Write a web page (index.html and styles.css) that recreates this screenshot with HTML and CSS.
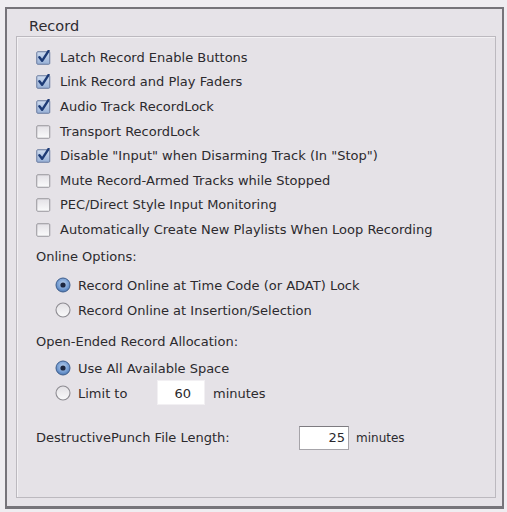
FILE: index.html
```html
<!DOCTYPE html>
<html>
<head>
<meta charset="utf-8">
<link rel="stylesheet" href="styles.css">
</head>
<body>
<div class="frame">
  <div class="title">Record</div>
  <div class="panel">
    <div class="row check-row"><svg class="cb" viewBox="0 0 15 15"><use href="#cb-on"/></svg><span>Latch Record Enable Buttons</span></div>
    <div class="row check-row"><svg class="cb" viewBox="0 0 15 15"><use href="#cb-on"/></svg><span>Link Record and Play Faders</span></div>
    <div class="row check-row"><svg class="cb" viewBox="0 0 15 15"><use href="#cb-on"/></svg><span>Audio Track RecordLock</span></div>
    <div class="row check-row"><svg class="cb" viewBox="0 0 15 15"><use href="#cb-off"/></svg><span>Transport RecordLock</span></div>
    <div class="row check-row"><svg class="cb" viewBox="0 0 15 15"><use href="#cb-on"/></svg><span>Disable "Input" when Disarming Track (In "Stop")</span></div>
    <div class="row check-row"><svg class="cb" viewBox="0 0 15 15"><use href="#cb-off"/></svg><span>Mute Record-Armed Tracks while Stopped</span></div>
    <div class="row check-row"><svg class="cb" viewBox="0 0 15 15"><use href="#cb-off"/></svg><span>PEC/Direct Style Input Monitoring</span></div>
    <div class="row check-row"><svg class="cb" viewBox="0 0 15 15"><use href="#cb-off"/></svg><span>Automatically Create New Playlists When Loop Recording</span></div>

    <div class="row label-row online">Online Options:</div>
    <div class="row radio-row first-radio"><svg class="rb" viewBox="0 0 16 16"><use href="#rb-on"/></svg><span>Record Online at Time Code (or ADAT) Lock</span></div>
    <div class="row radio-row"><svg class="rb" viewBox="0 0 16 16"><use href="#rb-off"/></svg><span>Record Online at Insertion/Selection</span></div>

    <div class="row label-row openended">Open-Ended Record Allocation:</div>
    <div class="row radio-row first-radio2"><svg class="rb" viewBox="0 0 16 16"><use href="#rb-on"/></svg><span>Use All Available Space</span></div>
    <div class="row radio-row"><svg class="rb" viewBox="0 0 16 16"><use href="#rb-off"/></svg><span class="limit-label">Limit to</span><span class="field field-60">60</span><span class="unit">minutes</span></div>

    <div class="row destructive"><span class="dest-label">DestructivePunch File Length:</span><span class="field field-25">25</span><span class="unit small">minutes</span></div>
  </div>
</div>

<svg class="defs" width="0" height="0">
  <defs>
    <linearGradient id="g-cb-on" x1="0" y1="0" x2="0" y2="1">
      <stop offset="0" stop-color="#d0ddf0"/>
      <stop offset="1" stop-color="#97b0d6"/>
    </linearGradient>
    <linearGradient id="g-cb-off" x1="0" y1="0" x2="0" y2="1">
      <stop offset="0" stop-color="#e3e1e6"/>
      <stop offset="1" stop-color="#fbfbfc"/>
    </linearGradient>
    <radialGradient id="g-rb-on" cx="0.5" cy="0.4" r="0.6">
      <stop offset="0" stop-color="#bcd2ee"/>
      <stop offset="0.7" stop-color="#6f98cf"/>
      <stop offset="1" stop-color="#4a74ad"/>
    </radialGradient>
    <linearGradient id="g-rb-off" x1="0" y1="0" x2="0" y2="1">
      <stop offset="0" stop-color="#e2e0e4"/>
      <stop offset="1" stop-color="#fafafb"/>
    </linearGradient>
    <g id="cb-on">
      <rect x="0.75" y="1.75" width="13" height="12.5" rx="1" fill="url(#g-cb-on)" stroke="#687a9e" stroke-width="1"/>
      <path d="M3.4 7.2 L6.1 10.8 L12.6 0.9" fill="none" stroke="#1d3b76" stroke-width="2.4" stroke-linecap="round" stroke-linejoin="round"/>
    </g>
    <g id="cb-off">
      <rect x="0.75" y="1.75" width="13" height="12.5" rx="1" fill="url(#g-cb-off)" stroke="#96949a" stroke-width="1"/>
    </g>
    <g id="rb-on">
      <circle cx="8" cy="8" r="7" fill="url(#g-rb-on)" stroke="#3f5f8e" stroke-width="1"/>
      <circle cx="8" cy="8" r="2.6" fill="#1c2740"/>
    </g>
    <g id="rb-off">
      <circle cx="8" cy="8" r="7" fill="url(#g-rb-off)" stroke="#8e8c92" stroke-width="1.1"/>
    </g>
  </defs>
</svg>
</body>
</html>
```

FILE: styles.css
```css
html, body {
  margin: 0;
  padding: 0;
  background: #efedf1;
}

body {
  font-family: "DejaVu Sans", Verdana, sans-serif;
  font-size: 13px;
  color: #2c2a2e;
}

.frame {
  box-sizing: border-box;
  margin: 7px 3px 0 5px;
  height: 502px;
  border: 2px solid #76747a;
  border-bottom-width: 3px;
  background: #e6e3e8;
  display: flex;
  flex-direction: column;
}

.title {
  font-size: 14.5px;
  line-height: 20px;
  padding: 7px 0 0 22px;
  height: 20px;
  color: #2e2c31;
}

.panel {
  flex: 1;
  margin: 0 6px 8px 9px;
  padding: 8px 0 0 19px;
  border: 1px solid #bcb9bf;
  box-shadow: inset 1px 1px 0 #f3f1f4;
  background: #e5e2e7;
}

.row {
  display: flex;
  align-items: center;
  white-space: nowrap;
}

.check-row {
  height: 24.6px;
}

.cb {
  width: 15px;
  height: 15px;
  margin-right: 9px;
  flex: none;
}

.label-row {
  height: 22px;
}

.online {
  margin-top: 4px;
}

.openended {
  margin-top: 8px;
}

.radio-row {
  height: 25px;
  padding-left: 19px;
}

.first-radio {
  margin-top: 5px;
}

.first-radio2 {
  margin-top: 3px;
}

.rb {
  width: 16px;
  height: 16px;
  margin-right: 7px;
  flex: none;
}

.limit-label {
  width: 79px;
}

.field {
  box-sizing: border-box;
  background: #ffffff;
  text-align: right;
  color: #2a282c;
}

.field-60 {
  width: 48px;
  height: 25px;
  line-height: 25px;
  padding-right: 13px;
  border: 1px solid #f2f0f3;
  margin-top: -2px;
}

.field-25 {
  width: 50px;
  height: 24px;
  line-height: 22px;
  padding-right: 3px;
  border: 1px solid #a6a4a9;
  border-top-color: #7d7b80;
}

.unit {
  margin-left: 8px;
}

.unit.small {
  font-size: 12px;
  margin-left: 7px;
}

.destructive {
  height: 26px;
  margin-top: 19px;
}

.dest-label {
  width: 263px;
}

.defs {
  position: absolute;
  width: 0;
  height: 0;
}
```
